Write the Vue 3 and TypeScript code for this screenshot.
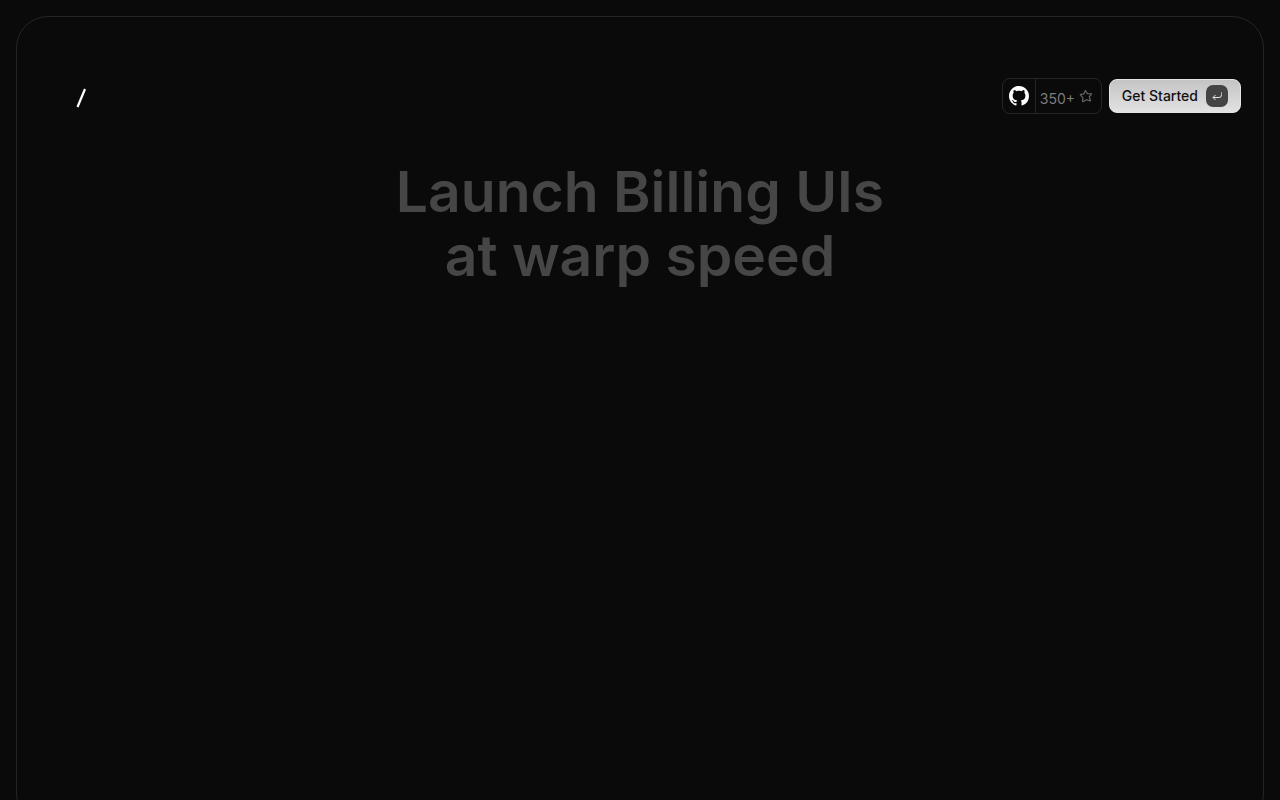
<script setup lang="ts">
const stars = '350+'
const titleLines: string[] = ['Launch Billing UIs', 'at warp speed']
</script>

<template>
  <div class="page">
    <div class="frame">
      <header class="bar">
        <a class="brand" href="#" aria-label="Home">
          <svg width="12" height="20" viewBox="0 0 12 20" aria-hidden="true">
            <path d="M10 1 L2.500 19" stroke="#fff" stroke-width="2.200" fill="none" />
          </svg>
        </a>
        <nav class="actions">
          <a class="github" href="#" aria-label="GitHub stars">
            <span class="mark">
              <svg width="20" height="20" viewBox="0 0 16 16" fill="#fff" aria-hidden="true">
                <path d="M8 0C3.58 0 0 3.58 0 8c0 3.54 2.29 6.53 5.47 7.59.4.07.55-.17.55-.38 0-.19-.01-.82-.01-1.49-2.01.37-2.53-.49-2.69-.94-.09-.23-.48-.94-.82-1.13-.28-.15-.68-.52-.01-.53.63-.01 1.08.58 1.23.82.72 1.21 1.87.87 2.33.66.07-.52.28-.87.51-1.07-1.78-.2-3.64-.89-3.64-3.95 0-.87.31-1.59.82-2.15-.08-.2-.36-1.02.08-2.12 0 0 .67-.21 2.2.82.64-.18 1.32-.27 2-.27s1.36.09 2 .27c1.53-1.04 2.2-.82 2.2-.82.44 1.1.16 1.92.08 2.12.51.56.82 1.27.82 2.15 0 3.07-1.87 3.75-3.65 3.95.29.25.54.73.54 1.48 0 1.07-.01 1.93-.01 2.2 0 .21.15.46.55.38A8.01 8.01 0 0 0 16 8c0-4.42-3.58-8-8-8Z" />
              </svg>
            </span>
            <span class="stars">
              <span class="count">{{ stars }}</span>
              <svg width="14" height="14" viewBox="0 0 14 14" fill="none" stroke="#666" stroke-width="1.200" stroke-linejoin="round" aria-hidden="true">
                <path d="M6.300 1.500L8.500 4.600L12.600 4.800L10.300 7.900L11.500 11.900L7.500 10.700L3.700 12.700L3.800 8.700L1.200 5.700L5 4.900Z" />
              </svg>
            </span>
          </a>
          <button class="start" type="button">
            <span>Get Started</span>
            <span class="key">
              <svg width="12" height="12" viewBox="0 0 12 12" fill="none" aria-hidden="true">
                <path d="M10.500 2 V5.500" stroke="#a8a8a8" />
                <path d="M10.500 5 Q10.500 7.500 8 7.500 H2 M4.500 5 L2 7.500 L4.500 10" stroke="#e4e4e4" />
              </svg>
            </span>
          </button>
        </nav>
      </header>
      <main>
        <h1><span v-for="line in titleLines" :key="line">{{ line }}</span></h1>
      </main>
    </div>
  </div>
</template>

<style>
body {
  margin: 0;
  background: #0a0a0a;
}
</style>

<style scoped>
.page {
  height: 100vh;
  overflow: hidden;
  box-sizing: border-box;
  padding: 16px;
  background: #0a0a0a;
  font-family: Inter, "Liberation Sans", sans-serif;
}
.frame {
  box-sizing: border-box;
  min-height: calc(100vh + 10px);
  border: 1px solid #262626;
  border-radius: 32px;
  padding: 61px 22px 0 56px;
}
.bar {
  display: flex;
  align-items: center;
  justify-content: space-between;
}
.brand {
  display: flex;
  padding: 4px 2px 0;
}
.actions {
  display: flex;
  align-items: center;
  gap: 7px;
}
.github {
  box-sizing: border-box;
  display: flex;
  width: 100px;
  height: 36px;
  border: 1px solid #262626;
  border-radius: 8px;
  color: #7c7c7c;
  text-decoration: none;
}
.mark {
  display: flex;
  align-items: center;
  justify-content: center;
  width: 32px;
  border-right: 1px solid #262626;
}
.stars {
  display: flex;
  align-items: center;
  gap: 4px;
  padding-left: 4px;
}
.count {
  padding-top: 6px;
  font-size: 14px;
  line-height: 20px;
}
.start {
  display: flex;
  align-items: center;
  gap: 8px;
  height: 34px;
  padding: 0 12px;
  border: 1px solid #e4e4e4;
  border-radius: 8px;
  background: linear-gradient(#c4c4c4, #e2e2e2);
  color: #111;
  font: 500 14px/20px Inter, "Liberation Sans", sans-serif;
}
.key {
  display: flex;
  align-items: center;
  justify-content: center;
  width: 22px;
  height: 22px;
  border-radius: 7px;
  background: #444;
}
h1 {
  display: flex;
  flex-direction: column;
  align-items: center;
  margin: 46px 34px 0 0;
  color: #464646;
  font-size: 57px;
  font-weight: 600;
  line-height: 64px;
}
</style>
